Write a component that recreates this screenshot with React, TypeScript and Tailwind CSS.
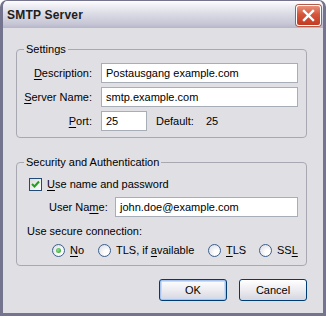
import React from "react";

const U = ({ children }: { children: React.ReactNode }) => (
  <span className="underline underline-offset-[2px] decoration-[1px]">{children}</span>
);

function TextBox({ value, className = "" }: { value: string; className?: string }) {
  return (
    <div
      className={`h-[20px] border border-[#a7aeb8] bg-white pl-[4px] flex items-center leading-[13px] ${className}`}
    >
      {value}
    </div>
  );
}

function Radio({ checked = false }: { checked?: boolean }) {
  return (
    <span className="w-[13px] h-[13px] shrink-0 rounded-full border border-[#3a5f8c] bg-[radial-gradient(circle_at_70%_70%,#ffffff_20%,#d8d8e0_100%)] flex items-center justify-center">
      {checked && (
        <span className="w-[5px] h-[5px] rounded-full bg-[radial-gradient(circle_at_40%_40%,#8ee08e,#1f9a1f)]" />
      )}
    </span>
  );
}

function RadioItem({
  label,
  checked,
  width,
}: {
  label: React.ReactNode;
  checked?: boolean;
  width: string;
}) {
  return (
    <div className={`flex items-center gap-[5px] shrink-0 ${width}`}>
      <Radio checked={checked} />
      <span className="leading-[13px]">{label}</span>
    </div>
  );
}

export default function App() {
  return (
    <div className="w-[326px] h-[318px] bg-white text-[11px] text-black font-['Liberation_Sans',Arial,sans-serif]">
      <div className="w-[326px] h-[316px] flex flex-col border-t border-x-[3px] border-b-[3px] border-[#74748e] rounded-t-[7px] overflow-hidden bg-[#e0dfe3]">
        {/* title bar */}
        <div className="h-[27px] shrink-0 flex items-start justify-between pl-[4px] pr-[2px] pt-[4px] bg-[linear-gradient(to_bottom,#ffffff_0%,#eeeef4_18%,#dadae4_50%,#c6c6d6_85%,#b6b6ca_100%)]">
          <span className="text-[12px] font-bold leading-[20px] text-[#202020] tracking-[0.2px]">SMTP Server</span>
          <div className="w-[25px] h-[21px] rounded-[3px] border border-white bg-[linear-gradient(to_bottom,#e8917b,#d4563a_45%,#c23b22_100%)] flex items-center justify-center shadow-[0_0_0_1px_#b35a4a]">
            <svg width="13" height="13" viewBox="0 0 13 13">
              <path d="M2 2 L11 11 M11 2 L2 11" stroke="white" strokeWidth="2.4" strokeLinecap="square" />
            </svg>
          </div>
        </div>

        <div className="flex flex-col pl-[13px] pr-[16px]">
          {/* Settings */}
          <fieldset className="min-w-0 mt-[15px] border border-[#a8a8b2] rounded-[4px] pt-[7px] pb-[6px] pr-[8px]">
            <legend className="ml-[7px] px-[2px] leading-[13px]">Settings</legend>
            <div className="grid grid-cols-[75px_1fr] gap-x-[9px] gap-y-[4px] items-center">
              <span className="text-right leading-[13px]">
                <U>D</U>escription:
              </span>
              <TextBox value="Postausgang example.com" />
              <span className="text-right leading-[13px]">
                <U>S</U>erver Name:
              </span>
              <TextBox value="smtp.example.com" />
              <span className="text-right leading-[13px]">
                <U>P</U>ort:
              </span>
              <div className="flex items-center">
                <TextBox value="25" className="w-[46px]" />
                <span className="ml-[9px] w-[50px] leading-[13px]">Default:</span>
                <span className="leading-[13px]">25</span>
              </div>
            </div>
          </fieldset>

          {/* Security */}
          <fieldset className="min-w-0 mt-[18px] border border-[#a8a8b2] rounded-[4px] pt-[9px] pb-[8px] pr-[8px]">
            <legend className="ml-[7px] px-[2px] leading-[13px]">Security and Authentication</legend>
            <div className="flex items-center pl-[12px] gap-[5px]">
              <span className="w-[13px] h-[13px] border border-[#1f4a7a] bg-[linear-gradient(135deg,#dcdcd7,#ffffff)] flex items-center justify-center">
                <svg width="9" height="9" viewBox="0 0 9 9">
                  <path d="M1 4 L3.5 6.5 L8 1.5" fill="none" stroke="#21a121" strokeWidth="2" />
                </svg>
              </span>
              <span className="leading-[13px]">
                <U>U</U>se name and password
              </span>
            </div>
            <div className="flex items-center mt-[6px] pl-[32px]">
              <span className="w-[66px] leading-[13px]">
                User Na<U>m</U>e:
              </span>
              <TextBox value="john.doe@example.com" className="flex-1 min-w-0" />
            </div>
            <div className="mt-[8px] pl-[10px] leading-[13px]">Use secure connection:</div>
            <div className="mt-[6px] pl-[35px] flex items-center">
              <RadioItem label={<><U>N</U>o</>} checked width="w-[46px]" />
              <RadioItem label={<>TLS, if <U>a</U>vailable</>} width="w-[110px]" />
              <RadioItem label={<><U>T</U>LS</>} width="w-[51px]" />
              <RadioItem label={<>SS<U>L</U></>} width="w-auto" />
            </div>
          </fieldset>

          {/* buttons */}
          <div className="mt-[13px] flex justify-end gap-[12px]">
            <button className="w-[68px] h-[22px] rounded-[3px] border border-[#003c74] bg-[linear-gradient(to_bottom,#ffffff,#f0f0f4_40%,#d6d6e0_100%)] shadow-[inset_0_0_0_1px_#a8c4ee,inset_0_0_0_2px_#cddcf4] leading-[13px]">
              OK
            </button>
            <button className="w-[68px] h-[22px] rounded-[3px] border border-[#003c74] bg-[linear-gradient(to_bottom,#ffffff,#f0f0f4_40%,#d6d6e0_100%)] leading-[13px]">
              Cancel
            </button>
          </div>
        </div>
      </div>
    </div>
  );
}
